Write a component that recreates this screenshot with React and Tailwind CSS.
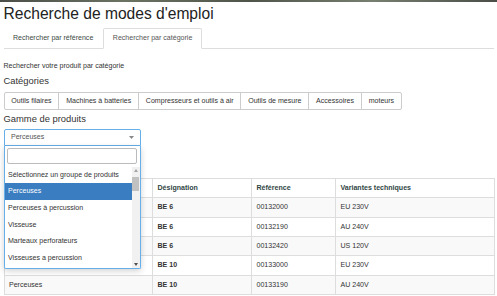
import React from 'react';

const categories = [
  'Outils filaires',
  'Machines à batteries',
  'Compresseurs et outils à air',
  'Outils de mesure',
  'Accessoires',
  'moteurs',
];

const options = [
  'Sélectionnez un groupe de produits',
  'Perceuses',
  'Perceuses à percussion',
  'Visseuse',
  'Marteaux perforateurs',
  'Visseuses a percussion',
];

const rows = [
  { gamme: 'Perceuses', designation: 'BE 6', reference: '00132000', variante: 'EU 230V' },
  { gamme: 'Perceuses', designation: 'BE 6', reference: '00132190', variante: 'AU 240V' },
  { gamme: 'Perceuses', designation: 'BE 6', reference: '00132420', variante: 'US 120V' },
  { gamme: 'Perceuses', designation: 'BE 10', reference: '00133000', variante: 'EU 230V' },
  { gamme: 'Perceuses', designation: 'BE 10', reference: '00133190', variante: 'AU 240V' },
];

function Caret({ className }) {
  return (
    <svg width="5" height="3" viewBox="0 0 5 3" className={className}>
      <path d="M0 0 L5 0 L2.5 3 Z" fill="#888" />
    </svg>
  );
}

function ProductSelect() {
  return (
    <div className="relative w-[137px] z-10">
      <div className="h-[17px] flex items-center justify-between pl-[6.5px] pr-[6px] border border-[#66afe9] rounded-t-[2px] bg-white text-[#555]">
        <span>Perceuses</span>
        <Caret />
      </div>
      <div className="absolute left-0 top-full w-[137px] bg-white border border-t-0 border-[#66afe9] rounded-b-[2px] shadow-[0_2px_6px_rgba(0,0,0,0.18)]">
        <div className="px-[2.5px] pt-[1.5px] pb-[3px]">
          <div className="h-[16px] border border-[#bbb] rounded-[2px] bg-white" />
        </div>
        <div className="flex h-[101px] overflow-hidden">
          <ul className="flex-1">
            {options.map((o, i) => (
              <li
                key={o}
                className={
                  'h-[16.7px] flex items-center px-[3.5px] whitespace-nowrap ' +
                  (i === 1 ? 'bg-[#3a7dc0] text-white' : 'text-[#333]')
                }
              >
                {o}
              </li>
            ))}
          </ul>
          <div className="w-[8px] bg-[#f1f1f1] flex flex-col items-center">
            <svg width="4" height="3" viewBox="0 0 4 3" className="mt-[2px]">
              <path d="M0 3 L4 3 L2 0 Z" fill="#a3a3a3" />
            </svg>
            <div className="w-[7px] h-[14px] mt-[5px] bg-[#c1c1c1]" />
            <div className="flex-1" />
            <svg width="4" height="3" viewBox="0 0 4 3" className="mb-[2px]">
              <path d="M0 0 L4 0 L2 3 Z" fill="#505050" />
            </svg>
          </div>
        </div>
      </div>
    </div>
  );
}

export default function App() {
  return (
    <div className="w-[497px] h-[296px] overflow-hidden bg-white text-[#333] text-[7.05px] leading-[10.4px] font-['Liberation_Sans',Arial,sans-serif]">
      <div className="h-[2px] bg-[linear-gradient(90deg,#4a4e47,#6b7363,#4f5549,#777f70,#4a4e47)]" />
      <div className="px-[3.5px]">
        <h1 className="text-[15.6px] leading-[18px] mt-[3px] text-[#222]">Recherche de modes d'emploi</h1>

        <div className="mt-[5px] flex border-b border-[#ddd] pl-[0.5px]">
          <div className="-mb-px mr-[1px] px-[8px] py-[4.3px] border border-transparent text-[#3d4a44]">
            Rechercher par référence
          </div>
          <div className="-mb-px px-[8.5px] py-[4.3px] border border-[#ddd] border-b-white rounded-t-[2px] bg-white text-[#555]">
            Rechercher par catégorie
          </div>
        </div>

        <p className="mt-[12px]">Rechercher votre produit par catégorie</p>

        <h4 className="mt-[4.5px] text-[9.4px] leading-[1.1]">Catégories</h4>

        <div className="mt-[5.5px] flex">
          {categories.map((c, i) => (
            <div
              key={c}
              className={
                'px-[6.8px] py-[2.8px] border border-[#ccc] bg-white text-[#333] whitespace-nowrap ' +
                (i === 0 ? 'rounded-l-[2px] ' : '-ml-px ') +
                (i === categories.length - 1 ? 'rounded-r-[2px]' : '')
              }
            >
              {c}
            </div>
          ))}
        </div>

        <h4 className="mt-[4px] text-[9.4px] leading-[1.1]">Gamme de produits</h4>

        <div className="mt-[5px]">
          <ProductSelect />
        </div>

        <table className="mt-[32px] w-[490.5px] table-fixed border-collapse">
          <colgroup>
            <col className="w-[148.5px]" />
            <col className="w-[99px]" />
            <col className="w-[84px]" />
            <col className="w-[159px]" />
          </colgroup>
          <thead>
            <tr className="h-[19.3px] text-left text-[#2f4544]">
              <th className="px-[4.5px] border border-[#ddd] font-bold">Gamme</th>
              <th className="px-[4.5px] border border-[#ddd] font-bold">Désignation</th>
              <th className="px-[4.5px] border border-[#ddd] font-bold">Référence</th>
              <th className="px-[4.5px] border border-[#ddd] font-bold">Variantes techniques</th>
            </tr>
          </thead>
          <tbody>
            {rows.map((r, i) => (
              <tr key={r.reference + i} className={'h-[19.3px] ' + (i % 2 === 0 ? 'bg-[#f9f9f9]' : 'bg-white')}>
                <td className="px-[4.5px] border border-[#ddd]">{r.gamme}</td>
                <td className="px-[4.5px] border border-[#ddd] font-bold">{r.designation}</td>
                <td className="px-[4.5px] border border-[#ddd]">{r.reference}</td>
                <td className="px-[4.5px] border border-[#ddd]">{r.variante}</td>
              </tr>
            ))}
          </tbody>
        </table>
      </div>
    </div>
  );
}
